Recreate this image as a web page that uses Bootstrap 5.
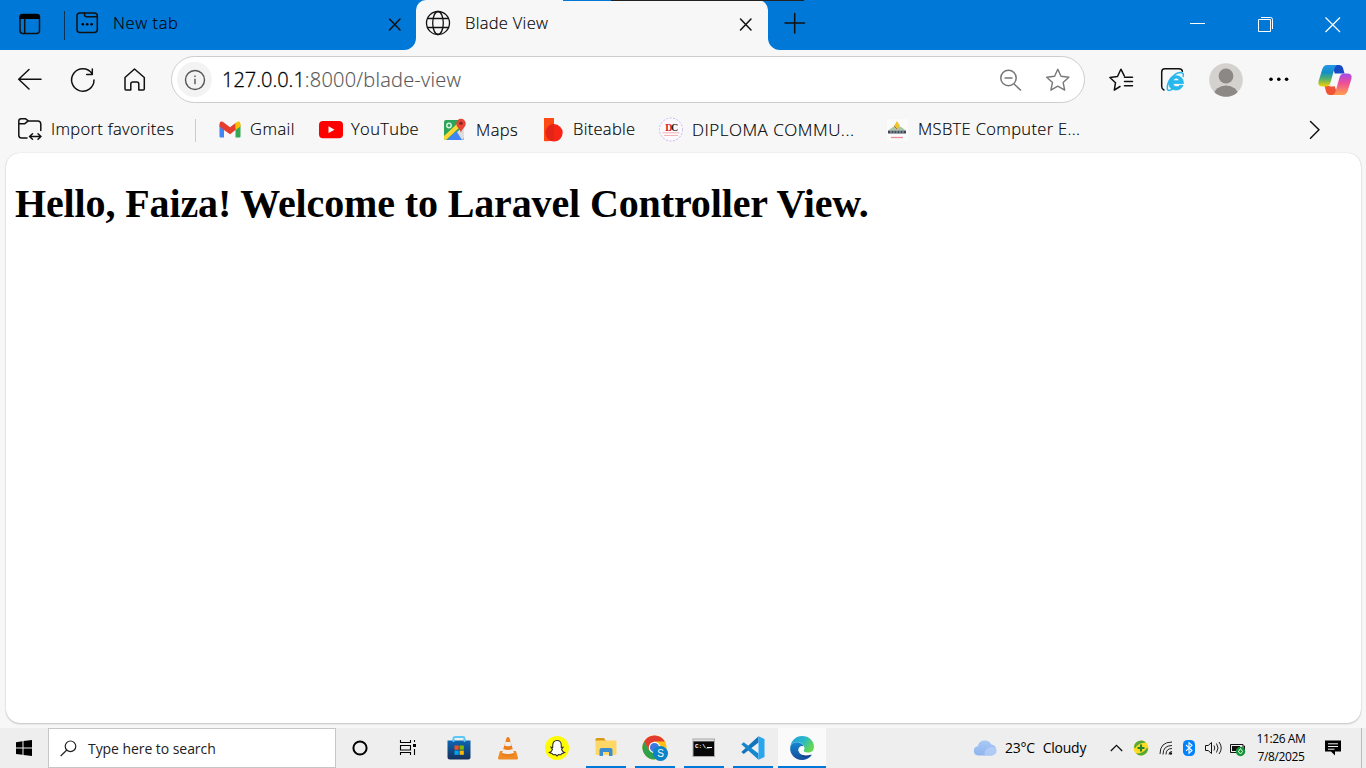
<!DOCTYPE html>
<html lang="en">
<head>
<meta charset="utf-8">
<title>Blade View</title>
<link rel="stylesheet" href="https://cdn.jsdelivr.net/npm/bootstrap@5.3.0/dist/css/bootstrap.min.css">
<script src="https://cdn.jsdelivr.net/npm/bootstrap@5.3.0/dist/js/bootstrap.bundle.min.js"></script>
<style>
body{width:1366px;height:768px;background:#f7f7f7;color:#000;font-family:"Open Sans","Noto Sans",sans-serif;overflow:hidden}
svg{display:block;flex:none;fill:none;overflow:visible}
.ln{stroke:#111;stroke-width:1.5;stroke-linecap:round;stroke-linejoin:round}
.txt{white-space:nowrap;flex:none;line-height:20px;font-weight:300;-webkit-text-stroke:.15px #000}
/* title bar */
.titlebar{height:50px}
.azure{background:#0078d7}
.tabs-left{width:416px;padding:0 13px 0 18px;border-bottom-right-radius:12px}
.tab-rule{width:1px;height:29px;margin:0 10px 0 22px;background:#0b3257}
.tab-live{width:352px;height:50px;background:#f7f7f7;border-radius:10px 10px 0 0;padding:0 14px 0 9px}
.tabs-right{border-bottom-left-radius:12px;padding-left:16px}
.t-tab{font-size:16.5px;margin-top:-4px}
.t-new{margin-left:14px;letter-spacing:.6px}
.t-blade{margin-left:14px;letter-spacing:.3px}
.win-min{margin-left:384px}.win-max{margin-left:52px}.win-close{margin-left:50px}
.edge-strip{left:563px;top:0;width:241px;height:1px;background:linear-gradient(90deg,#0078d7 48px,#222 48px)}
/* toolbar */
.toolbar{height:58px;padding:2px 14px 0 18px}
.omni{width:914px;height:47px;border:1.5px solid #cdcdcd;border-radius:24px;background:#fff;margin:-1px 0 0 24px;padding:0 13px 0 5px}
.info-dot{width:35px;height:35px;background:#f3f3f3}
.t-url{font-size:20px;margin-left:10px;letter-spacing:.22px;color:#555;-webkit-text-stroke-color:#555}
.t-url span{color:#000;letter-spacing:0;-webkit-text-stroke:.3px #000}
.more{margin-left:24px}
/* favourites */
.favs{height:44px;padding-left:17px}
.fav{height:42px}
.fav .txt{font-size:16.5px;margin-left:7px}
.fav-rule{width:1px;height:23px;background:#ccc}
.w-import{width:178px}.w-gmail{width:100px;margin-left:22px}.w-yt{width:124px}.w-maps{width:100px}.w-bite{width:116px}.w-dip{width:227px}.w-msbte{width:423px}
.fav.w-import .txt{letter-spacing:.32px;margin:-2px 0 0 8px}
.fav.w-gmail .txt{letter-spacing:.45px;margin:-2px 0 0 8px}
.fav.w-yt .txt{letter-spacing:.38px;margin-top:-2px}
.fav.w-maps .txt{letter-spacing:.4px;margin-left:8px}
.fav.w-bite .txt{letter-spacing:.3px;margin-top:-2px}
.fav.w-dip .txt{font-size:17px;letter-spacing:.5px;margin-left:8px}
.fav.w-msbte .txt{letter-spacing:.34px;margin:-2px 0 0 8px}
/* page */
.page-view{width:1355px;height:570px;margin:1px 0 0 6px;border-radius:14px;background:#fff;box-shadow:0 0 1px rgba(0,0,0,.2),0 1px 2px rgba(0,0,0,.2);padding:31px 9px}
.page-view h1{font:bold 40px/40px "Liberation Serif",serif;letter-spacing:-.125px;margin:0;white-space:nowrap}
/* taskbar */
.taskbar{height:40px;margin-top:5px;background:#eee}
.slot{width:48px;height:40px}
.find{width:288px;border:1px solid #c6c6c6;background:#fff;padding-left:11px}
.t-find{font-size:14px;margin:2px 0 0 11px;color:#222;font-weight:400;letter-spacing:-.06px;-webkit-text-stroke:0}
.apps{margin-left:2px}
.app-slot{width:49px}
.running{background:linear-gradient(#0078d7,#0078d7) center bottom/40px 2px no-repeat}
.front{margin-left:1px;background:linear-gradient(#0078d7,#0078d7) left bottom/48px 2px no-repeat #fafafa}
.tray{margin-left:147px}
.t-tray{font-size:14px;font-weight:400;-webkit-text-stroke:0;width:89px;word-spacing:4.5px;margin-left:7px;letter-spacing:-.25px}
.clock{width:62px;margin-left:3px;font-size:12px;line-height:18px;letter-spacing:-.4px}
.action{margin-left:12px}
.desk-edge{width:1px;height:40px;background:#bbb;margin-left:19px}
</style>
</head>
<body>
<header>
<div class="titlebar d-flex position-relative">
  <div class="tabs-left azure d-flex align-items-center">
    <svg width="24" height="24" viewBox="18 13 24 24"><rect x="20" y="14.500" width="19.500" height="19" rx="3" class="ln"/><path d="M19.500 19v-2q0-3 3-3h14.500q3 0 3 3v2z" fill="#000"/><path d="M24.700 19v14" class="ln"/></svg>
    <div class="tab-rule"></div>
    <svg width="24" height="24" viewBox="75 13 24 24"><rect x="77" y="13" width="20.300" height="19.500" rx="3" class="ln"/><path d="M84.500 13v1.500q0 2.300 2.300 2.300h10" class="ln"/><g fill="#000"><circle cx="82.800" cy="24.300" r="1.300"/><circle cx="87.200" cy="24.300" r="1.300"/><circle cx="91.600" cy="24.300" r="1.300"/></g></svg>
    <div class="txt t-tab t-new">New tab</div>
    <svg class="ms-auto" width="16" height="16" viewBox="387 17 16 16"><path d="M389.500 19l10.500 11M400 19l-10.500 11" class="ln"/></svg>
  </div>
  <div class="azure"><div class="tab-live d-flex align-items-center">
    <svg width="26" height="26" viewBox="425 12 26 26" class="ln"><circle cx="438" cy="23" r="11.500" stroke-width="1.300"/><ellipse cx="438" cy="23" rx="5.300" ry="11.500" stroke-width="1.300"/><path d="M427.500 18.500h21M427.500 27.500h21" stroke-width="1.300"/></svg>
    <div class="txt t-tab t-blade">Blade View</div>
    <svg class="ms-auto" width="16" height="16" viewBox="738 17 16 16"><path d="M740.500 19l10.500 11M751 19l-10.500 11" class="ln"/></svg>
  </div></div>
  <div class="tabs-right azure flex-grow-1 d-flex align-items-center">
    <svg width="22" height="22" viewBox="784 14 22 22"><path d="M785 23h19.500M794.700 13.500v19.500" class="ln"/></svg>
    <svg class="win-min" width="16" height="16" viewBox="1190 17 16 16"><path d="M1190 23.500h15" stroke="#fff"/></svg>
    <svg class="win-max" width="17" height="17" viewBox="1258 17 17 17"><path d="M1258.500 19.500h12v12h-12zM1261 17.500h9.500q2 0 2 2v9.500" stroke="#fff"/></svg>
    <svg class="win-close" width="16" height="16" viewBox="1325 17 16 16"><path d="M1325.500 17.500l14.500 14.500M1340 17.500l-14.500 14.500" stroke="#fff" stroke-width="1.200"/></svg>
  </div>
  <div class="edge-strip position-absolute"></div>
</div>
<div class="toolbar d-flex align-items-center">
  <svg width="24" height="24" viewBox="18 68 24 24"><path d="M41 79.300H19M29 69.500l-10.300 9.800L29 89" class="ln"/></svg>
  <svg class="ms-4 me-4" width="32" height="26" viewBox="66 67 32 26"><path d="M92 73.600A11.200 11.200 0 1 0 94 80M92.300 69v5.400h-5.600" class="ln"/></svg>
  <svg width="25" height="26" viewBox="122 67 25 26"><path d="M125 77.500l9.500-8.500 9.800 8.500v11.500q0 1-1 1h-4.500v-6q0-2-2-2h-4q-2 0-2 2v6h-4.800q-1 0-1-1z" class="ln"/></svg>
  <div class="omni d-flex align-items-center">
    <div class="info-dot rounded-circle d-flex align-items-center justify-content-center"><svg width="22" height="22" viewBox="0 0 22 22"><g stroke="#555" stroke-width="1.400"><circle cx="11" cy="11" r="9.500"/><path d="M11 9.800v5.500M11 6.500v1.500"/></g></svg></div>
    <div class="txt t-url"><span>127.0.0.1</span>:8000/blade-view</div>
    <svg class="ms-auto" width="24" height="24" viewBox="999 67 24 24"><g stroke="#777" stroke-width="1.500"><circle cx="1008.500" cy="77" r="7.700"/><path d="M1014 83l7 6.500M1004.500 77h8"/></g></svg>
    <svg class="ms-4" width="24" height="24" viewBox="1047 68 24 24"><path d="M1057.800 69.300l3.200 7 7.900.9-5.800 5.200 1.600 7.700-6.900-3.900-6.900 3.900 1.600-7.700-5.800-5.200 7.900-.9z" stroke="#777" stroke-width="1.400" stroke-linejoin="round"/></svg>
  </div>
  <svg class="ms-4" width="26" height="26" viewBox="1109 67 26 26"><path d="M1120 86.500l-5.700 3.700 1.200-7.500-5.600-5.200 7.600-1 3.400-7.300 3.400 6.600M1124.500 77.200h8M1124.500 81.400h8M1124.500 85.700h8" class="ln"/></svg>
  <svg class="ms-4" width="26" height="26" viewBox="1159 67 26 26"><path d="M1164 90q-2.300-1-2.300-3.500V72q0-3.200 3.200-3.200H1179q3 0 3.400 2.500" class="ln"/><path d="M1183.500 83.500h-10.500q.3 3.300 3.600 3.300 2.200 0 3.200-1.500h3.200q-1.700 4.700-7 4.700-6.900 0-7.200-6.900.3-7.200 7.300-7.400 7.100.2 7.400 7.800zm-10.300-2.800h6.200q-.5-2.600-3.100-2.600t-3.100 2.600z" fill="#25b7ed" fill-rule="evenodd" stroke="#25b7ed" stroke-width=".8"/><path d="M1183 77q1.500-4.500-2.500-4.600c-5 0-14 8.100-13.200 16.600.8 2.700 4 1 5.200-.1" stroke="#25b7ed" stroke-width="1.500"/></svg>
  <svg class="ms-4" width="34" height="34" viewBox="0 0 34 34"><clipPath id="face"><circle cx="17" cy="17" r="16.800"/></clipPath><g clip-path="url(#face)"><rect width="34" height="34" fill="#d3d2ce"/><circle cx="17" cy="13" r="7.400" fill="#8b8886"/><ellipse cx="17" cy="32" rx="12" ry="9.500" fill="#8b8886"/></g></svg>
  <svg class="more" width="24" height="10" viewBox="1267 75 24 10"><g fill="#000"><circle cx="1271" cy="79.300" r="1.800"/><circle cx="1278.800" cy="79.300" r="1.800"/><circle cx="1286.600" cy="79.300" r="1.800"/></g></svg>
  <svg class="ms-auto" width="34" height="32" viewBox="0 0 34 32"><defs><linearGradient id="cp1" x2="0" y2="1"><stop stop-color="#2596e8"/><stop offset=".35" stop-color="#128fc6"/><stop offset=".65" stop-color="#55b16b"/><stop offset="1" stop-color="#f6d000"/></linearGradient><linearGradient id="cp2" x2="0" y2="1"><stop stop-color="#a24bea"/><stop offset=".45" stop-color="#ef5096"/><stop offset="1" stop-color="#ffa04b"/></linearGradient></defs><path d="M14 1h7q3 0 4 3l1.500 5.500h-4q-3.500 0-4.500 3.500z" fill="#174bc4"/><path d="M20 31h-8q-3 0-4-3.500L6.500 22h4q3.500 0 4.500-4z" fill="#ef5436"/><path d="M9 1h10q-2 1-3 5l-3.500 12.500q-1 4-5 4H5Q-.5 22.500.5 17.500L4 6q1.500-5 5-5z" fill="url(#cp1)"/><path d="M25 31H15q2-1 3-5l3.500-12.500q1-4 5-4H29q5.500 0 4.500 5L30 26q-1.500 5-5 5z" fill="url(#cp2)"/><path d="M17.300 9.500h4.500q-1 1.200-1.500 3l-2 7q-.8 2.700-3.300 3h-3.500q1.500-1.200 2-3l2.300-8z" fill="#f7f7f7"/></svg>
</div>
<nav class="favs d-flex align-items-center">
  <div class="fav w-import d-flex align-items-center"><svg width="26" height="26" viewBox="17 117 26 26"><path d="M27 138h-5.500q-2.700 0-2.700-2.700V121q0-2.300 2.500-2.300h4l3 2.200h9.300q3.200 0 3.200 3.200v6.400M18.800 123.700h6l3.500-2.800M30 136.500h11M32.500 133.800l-3 2.700 3 2.700M38 133.800l3 2.700-3 2.700" class="ln"/></svg><div class="txt">Import favorites</div></div>
  <div class="fav-rule"></div>
  <div class="fav w-gmail d-flex align-items-center"><svg width="24" height="24" viewBox="218 118 24 24"><path d="M220 125l4 3v9.500h-3.500q-1 0-1-1v-11z" fill="#4285f4"/><path d="M240 125l-4.500 3v9.500h4q1 0 1-1v-11z" fill="#34a853"/><path d="M235.500 123l2-1.300q3-.8 3 2.300v2.500l-5 3.500z" fill="#fbbc04"/><path d="M219.500 126.500v-2.500q.2-3.200 3.300-2.200l7.200 5.500 5.500-4.300v7l-5.500 4.200-6-4.200z" fill="#e53e30"/></svg><div class="txt">Gmail</div></div>
  <div class="fav w-yt d-flex align-items-center"><svg width="26" height="24" viewBox="318 118 26 24"><rect x="319" y="121" width="24" height="17.300" rx="4" fill="#f00"/><path d="M328.500 126.200v6.900l6-3.450z" fill="#fff"/></svg><div class="txt">YouTube</div></div>
  <div class="fav w-maps d-flex align-items-center"><svg width="26" height="26" viewBox="442 117 26 26"><rect x="444" y="120" width="20" height="20" rx="2" fill="#2ca45a"/><path d="M447 140l9-9 7.500 9z" fill="#4285f4"/><path d="M444 136l14-13 3 3-15 14q-2 0-2-2z" fill="#fdd835"/><path d="M457 132l7-6v12l-2 2z" fill="#ddd"/><circle cx="449" cy="125.500" r="2.200" stroke="#d5f0dd" stroke-width="1.500"/><path d="M461 133c-.5-4-4.700-5.500-4.700-9.500a4.700 4.700 0 0 1 9.400 0c0 4-4.200 5.500-4.700 9.500z" fill="#e64537"/><circle cx="461" cy="123.300" r="1.700" fill="#8c251b"/></svg><div class="txt">Maps</div></div>
  <div class="fav w-bite d-flex align-items-center"><svg width="24" height="26" viewBox="542 117 24 26"><path d="M544 118h10v22q-6 2-10 1z" fill="#ff4a13"/><circle cx="554" cy="132.800" r="8.700" fill="#f72516"/><path d="M546 130q4-7 8-6v16q-7 1-8-6z" fill="#e32419"/></svg><div class="txt">Biteable</div></div>
  <div class="fav w-dip d-flex align-items-center"><svg width="26" height="26" viewBox="658 117 26 26"><circle cx="671" cy="129.500" r="11.500" fill="#fdfaff" stroke="#c8b4ee" stroke-dasharray="2 1.500"/><text x="671" y="131" text-anchor="middle" font-family="Liberation Serif" font-weight="bold" font-size="10" letter-spacing="-1.500" fill="#d71920">D<tspan fill="#222">C</tspan></text><path d="M662.500 132.800h17M664 135.500h14" stroke="#f2b4b4"/></svg><div class="txt">DIPLOMA COMMU...</div></div>
  <div class="fav w-msbte d-flex align-items-center"><svg width="25" height="25" viewBox="885 117 25 25"><rect x="887" y="118" width="21" height="22" fill="#fbfbfb"/><path d="M889 129q4-4 8-4t8 4z" fill="#a9c8a2"/><path d="M897 120l3 5-3 3-3-3z" fill="#eec52d"/><path d="M894 125l3 3" stroke="#cc603d"/><path d="M888 129.500h18v3h-18z" fill="#3c4954"/><path d="M890 131h14" stroke="#a3b1aa" stroke-dasharray="2 1"/><path d="M891 136.500h12" stroke="#f08a99" stroke-width="1.300"/></svg><div class="txt">MSBTE Computer E...</div></div>
  <svg width="14" height="20" viewBox="1308 120 14 20"><path d="M1310.500 121.500l8.500 8.300-8.500 8.500" class="ln"/></svg>
</nav>
</header>
<main class="page-view"><h1>Hello, Faiza! Welcome to Laravel Controller View.</h1></main>
<footer class="taskbar d-flex">
  <div class="slot d-flex align-items-center justify-content-center"><svg width="16" height="16" viewBox="0 0 16 16"><path d="M0 2.200l6.500-.9v6.300H0zM7.500 1.100L16 0v7.600H7.500zM0 8.500h6.500v6.200L0 13.900zM7.500 8.500H16V16l-8.500-1.100z" fill="#000"/></svg></div>
  <div class="find d-flex align-items-center"><svg width="17" height="17" viewBox="0 0 17 17"><circle cx="10.500" cy="6.300" r="5.300" stroke="#222" stroke-width="1.200"/><path d="M6.800 10L.7 16" stroke="#222" stroke-width="1.200"/></svg><div class="txt t-find">Type here to search</div></div>
  <div class="slot d-flex align-items-center justify-content-center"><svg width="18" height="18" viewBox="0 0 18 18"><circle cx="9" cy="9" r="6.600" stroke="#000" stroke-width="2"/></svg></div>
  <div class="slot d-flex align-items-center justify-content-center"><svg width="18" height="18" viewBox="399 739 18 18"><path d="M400.500 740v2.500h10V740M400.500 755v-2.500h10v2.500M400.500 745.500h10v4.500h-10zM414.500 740v2M414.500 749v6" stroke="#000" stroke-width="1.100"/><path d="M413 744h3v3h-3z" fill="#000"/></svg></div>
  <div class="apps d-flex">
    <div class="slot app-slot d-flex align-items-center justify-content-center"><svg width="24" height="26" viewBox="0 0 24 26"><defs><linearGradient id="st" x2="0" y2="1"><stop stop-color="#0d65b3"/><stop offset="1" stop-color="#16315c"/></linearGradient></defs><path d="M6.500 7V3.500q0-1.500 1.500-1.500h8q1.500 0 1.500 1.500V7" stroke="#5bc8f5" stroke-width="1.800"/><path d="M.5 5.500h23V22q0 2.500-2.500 2.500H3Q.5 24.500.5 22z" fill="url(#st)"/><path d="M6.500 7V3.500M17.500 7V3.500" stroke="#5bc8f5" stroke-width="1.800"/><path d="M7.500 10.500h4.200v4.200H7.500z" fill="#f25022"/><path d="M12.600 10.500h4.200v4.200h-4.200z" fill="#7fba00"/><path d="M7.500 15.600h4.200v4.200H7.500z" fill="#00a4ef"/><path d="M12.600 15.600h4.200v4.200h-4.200z" fill="#ffb900"/></svg></div>
    <div class="slot app-slot d-flex align-items-center justify-content-center"><svg width="22" height="26" viewBox="0 0 22 26"><path d="M3 16h16l2 7q0 1.500-1.500 1.500h-17Q1 24.500 1 23z" fill="#ef8b24"/><path d="M9.500 3q1.500-2 3 0l5 17q-6.500 3-13 0z" fill="#ee7d1c"/><path d="M8.500 6.500q2.500 1 5 0l1.200 4q-3.700 1.500-7.400 0zM6.300 14q4.700 2 9.400 0l1.300 4q-6 2-12 0z" fill="#eee"/></svg></div>
    <div class="slot app-slot d-flex align-items-center justify-content-center"><svg width="24" height="24" viewBox="0 0 24 24"><circle cx="12" cy="12" r="12" fill="#fffb00"/><path d="M12 4.500c3 0 4.300 2 4.300 5v2l1.700-.2-1.500 2q1 2.600 3 3.200l-2.800 1.300-1 1-2.200-.2L12 20l-1.500-1.400-2.200.2-1-1-2.800-1.300q2-.6 3-3.200l-1.500-2 1.700.2v-2c0-3 1.300-5 4.300-5z" fill="#fff" stroke="#333" stroke-width="1.100"/></svg></div>
    <div class="slot app-slot running d-flex align-items-center justify-content-center"><svg width="22" height="22" viewBox="0 0 22 22"><path d="M.5 4V2.500Q.5 1 2 1h7l2 3z" fill="#d99a13"/><path d="M.5 3.500h21V17q0 1-1 1h-19q-1 0-1-1z" fill="#ffd767"/><path d="M4.500 19v-6q0-2 2-2h9q2 0 2 2v6H14v-4H8v4z" fill="#398dd0"/></svg></div>
    <div class="slot app-slot running d-flex align-items-center justify-content-center"><svg width="26" height="26" viewBox="0 0 26 26"><circle cx="12.500" cy="12.500" r="12" fill="#fbc116"/><path d="M2.100 6.500a12 12 0 0 1 20.800 0h-10.400L7.300 15.500z" fill="#e33b2e"/><path d="M2.100 6.500a12 12 0 0 0 10.400 18l5.200-9h-10.400z" fill="#30a04c"/><circle cx="12.500" cy="12.500" r="5.700" fill="#fff"/><circle cx="12.500" cy="12.500" r="4.500" fill="#3a77e0"/><circle cx="18.500" cy="18.500" r="7.500" fill="#0c83c7"/><text x="18.500" y="22" text-anchor="middle" font-family="Liberation Sans" font-size="10" fill="#fff">S</text></svg></div>
    <div class="slot app-slot running d-flex align-items-center justify-content-center"><svg width="24" height="22" viewBox="0 0 24 22"><rect x=".5" y="1.500" width="22.500" height="18.500" fill="#aaa"/><path d="M1.500 4.500h20.500v14.500H1.500z" fill="#080808"/><path d="M1.500 2.500h20.500v1.500H1.500z" fill="#ddd"/><text x="3" y="10.500" font-family="Liberation Mono" font-size="6" font-weight="bold" fill="#fff">C:\_</text><path d="M15 10.500h5" stroke="#fff"/></svg></div>
    <div class="slot app-slot running d-flex align-items-center justify-content-center"><svg width="24" height="24" viewBox="0 0 24 24"><path d="M17.500.3v6.200L2.700 18l-2.400-2z" fill="#1574b9"/><path d="M.3 8.200l2.400-2L17.500 17.500v6.200z" fill="#1687cf"/><path d="M17.500.3L23.500 3v18l-6 2.700z" fill="#2aa6ef"/></svg></div>
    <div class="slot front d-flex align-items-center justify-content-center"><svg width="24" height="24" viewBox="0 0 24 24"><defs><linearGradient id="ed" y2=".5"><stop stop-color="#1c9de0"/><stop offset=".55" stop-color="#2ab7c9"/><stop offset="1" stop-color="#65d84e"/></linearGradient><linearGradient id="ee" x2="0" y2="1"><stop stop-color="#1388cf"/><stop offset="1" stop-color="#164d9b"/></linearGradient></defs><path d="M.2 11.500C1 4.500 6 0 12 0c7 0 12 5 12 10.500 0 4.500-3 6-6 6-3.500 0-5-1-4-2.500C16 11 12 6 7 6 3.500 6 1 8.500.2 11.500z" fill="url(#ed)"/><path d="M.2 11.500C1 8 4 6.200 7 6.200c4 0 6.500 2.500 6.500 4.300-3.500-1-6 2-4.500 5.500 1.500 4 6 5.500 12.800 3C19.500 22.500 15.500 24 12 24 5 24-.5 18 .2 11.500z" fill="url(#ee)"/><path d="M9 16c-1.500-3.500 1-6.500 4.500-5.500.5 1-.5 2-.5 3.300q.5 3 5 3.500c-2.500 1.500-6 1.700-9-1.300z" fill="#fafafa"/><path d="M9 15c0 4 5 5.500 12.800 3.500-3.800 5-11.800 3.500-12.800-3.500z" fill="#103f86"/></svg></div>
  </div>
  <div class="tray d-flex align-items-center">
    <svg width="25" height="18" viewBox="0 0 25 18"><defs><linearGradient id="cl" x2="0" y2="1"><stop stop-color="#a9c8f5"/><stop offset="1" stop-color="#8eb5ee"/></linearGradient></defs><path d="M5 16.500a4.700 4.700 0 0 1-.3-9.300A7.300 7.300 0 0 1 18.300 5.500 5.600 5.600 0 0 1 19 16.500z" fill="url(#cl)"/><path d="M12 16.500q-2-4 3-7.500 8-3 9 3 0 4-5 4.500z" fill="#c0d6f9" opacity=".6"/></svg>
    <div class="txt t-tray">23°C Cloudy</div>
    <svg class="ms-3" width="13" height="10" viewBox="0 0 13 10"><path d="M.8 8l5.700-5.700L12.200 8" stroke="#111" stroke-width="1.300"/></svg>
    <svg class="ms-2" width="20" height="18" viewBox="1131 739 20 18"><circle cx="1141" cy="748" r="7.500" fill="#ffdc25"/><path d="M1134 747a7.200 7.200 0 0 1 12-4.500q-8 0-11 6zM1148 749a7.200 7.200 0 0 1-12 4.500q8 0 11-6z" fill="#52a83c"/><path d="M1141 744.500v7M1137.500 748h7" stroke="#25842d" stroke-width="2.200"/></svg>
    <svg class="ms-1" width="20" height="18" viewBox="1155 739 20 18"><path d="M1160 754q0-12 12-12M1163 754.500q0-9 9-9M1166 754.500q0-6 6-6M1169 754.500q0-3 3-3" stroke="#222"/><circle cx="1170.800" cy="753.500" r="1.300" fill="#111"/></svg>
    <svg class="ms-1" width="20" height="18" viewBox="1179 739 20 18"><rect x="1183" y="740" width="12" height="16" rx="4.500" fill="#0082fc"/><path d="M1186 745l6 5.500-3 2.700v-10.500l3 2.600-6 5.500" stroke="#fff" stroke-width="1.100"/></svg>
    <svg class="ms-1" width="20" height="18" viewBox="1203 739 20 18"><path d="M1205.500 745.500h2.700l3.300-3v11l-3.300-3h-2.700z" stroke="#111"/><path d="M1214 745.500q1.500 2.500 0 5M1216.500 743.500q3 4.500 0 9M1219 742q4.500 6 0 12" stroke="#222"/></svg>
    <svg class="ms-1" width="20" height="18" viewBox="1227 739 20 18"><path d="M1230.500 744.500h12.500v8h-12.500z" stroke="#111"/><path d="M1232 746h8v5h-8z" fill="#111"/><path d="M1243.500 746h1v4h-1" stroke="#111"/><circle cx="1240.500" cy="751.500" r="4.700" fill="#149437"/><path d="M1240.500 748.500l2 3-2 2.500-2-2.500z" stroke="#fff" stroke-width=".9"/></svg>
    <div class="clock text-center">11:26 AM<br>7/8/2025</div>
    <svg class="action" width="18" height="18" viewBox="1324 739 18 18"><path d="M1325 740.500h16v11h-6v4l-4-4h-6z" fill="#000"/><path d="M1328 743.800h10M1328 746.500h10M1328 749.200h6.500" stroke="#eee"/></svg>
    <div class="desk-edge"></div>
  </div>
</footer>
</body>
</html>
